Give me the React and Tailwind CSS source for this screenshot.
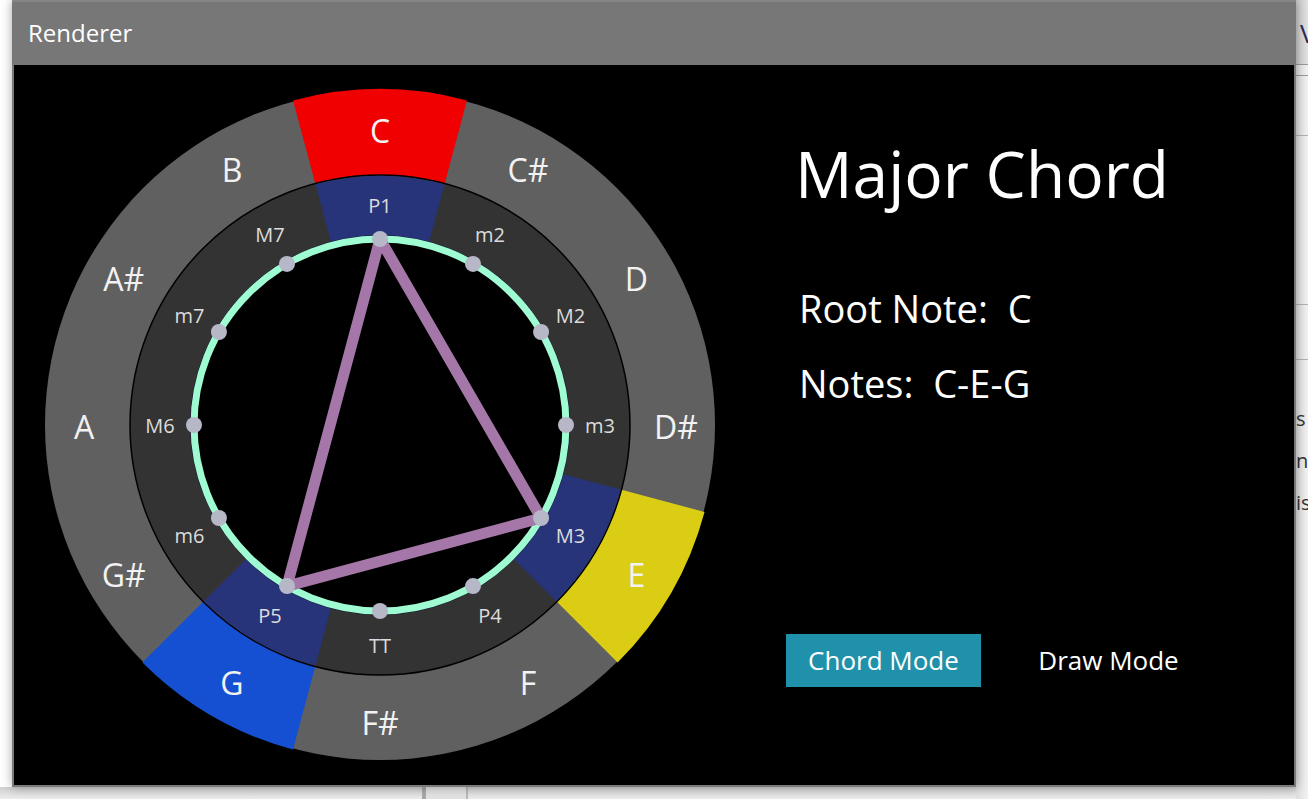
import React from "react";

const CX = 366;
const CY = 360;

const NOTES = ["C", "C#", "D", "D#", "E", "F", "F#", "G", "G#", "A", "A#", "B"];
const INTERVALS = ["P1", "m2", "M2", "m3", "M3", "P4", "TT", "P5", "m6", "M6", "m7", "M7"];
const NOTE_FILL = { 0: "#f00000", 4: "#dbcc14", 7: "#1650d2" };
const CHORD = [0, 4, 7];

function pt(deg, r) {
  const a = (deg * Math.PI) / 180;
  return [CX + r * Math.sin(a), CY - r * Math.cos(a)];
}

function sector(i, r1, r2) {
  const a1 = i * 30 - 15;
  const a2 = i * 30 + 15;
  const [x1, y1] = pt(a1, r2);
  const [x2, y2] = pt(a2, r2);
  const [x3, y3] = pt(a2, r1);
  const [x4, y4] = pt(a1, r1);
  return `M${x1} ${y1} A${r2} ${r2} 0 0 1 ${x2} ${y2} L${x3} ${y3} A${r1} ${r1} 0 0 0 ${x4} ${y4} Z`;
}

function Wheel() {
  const tri = CHORD.map((i) => pt(i * 30, 186).join(",")).join(" ");
  return (
    <svg width="720" height="720" viewBox="0 0 720 720" className="shrink-0">
      <circle cx={CX} cy={CY} r="335" fill="#606060" />
      {CHORD.map((i) => (
        <path key={"n" + i} d={sector(i, 249, 336)} fill={NOTE_FILL[i]} />
      ))}
      <circle cx={CX} cy={CY} r="250" fill="#333333" stroke="#000" strokeWidth="1.5" />
      {CHORD.map((i) => (
        <path key={"i" + i} d={sector(i, 189, 249.2)} fill="#283479" />
      ))}
      <circle cx={CX} cy={CY} r="189.5" fill="none" stroke="#0b1030" strokeWidth="1" />
      <circle cx={CX} cy={CY} r="186" fill="#000" stroke="#9ffcd2" strokeWidth="7" />
      {NOTES.map((n, i) => {
        const [x, y] = pt(i * 30, 296);
        return (
          <text key={n} x={x} y={y + 1} textAnchor="middle" dominantBaseline="central" fill="#f2f2f2" fontSize="32" fontFamily="'Open Sans', sans-serif">
            {n}
          </text>
        );
      })}
      {INTERVALS.map((n, i) => {
        const [x, y] = pt(i * 30, 220);
        return (
          <text key={n} x={x} y={y} textAnchor="middle" dominantBaseline="central" fill="#dcdcdc" fontSize="20" fontFamily="'Open Sans', sans-serif">
            {n}
          </text>
        );
      })}
      <polygon points={tri} fill="none" stroke="#a577a9" strokeWidth="11" strokeLinejoin="round" />
      {INTERVALS.map((n, i) => {
        const [x, y] = pt(i * 30, 186);
        return <circle key={"d" + n} cx={x} cy={y} r="8" fill="#b6b8c8" />;
      })}
    </svg>
  );
}

export default function App() {
  return (
    <div className="relative w-[1308px] h-[799px] overflow-hidden bg-white font-['Open_Sans',sans-serif]">
      {/* app behind the window */}
      <div className="flex h-full">
        <div className="w-[1296px] flex flex-col">
          <div className="flex-1 bg-white" />
          <div className="h-[12px] flex bg-gradient-to-b from-[#cfcfcf] to-[#ececec]">
            <div className="w-[422px]" />
            <div className="w-[4px] bg-[#a8a8a8]" />
            <div className="w-[40px] bg-[#e2e2e2]" />
            <div className="w-[2px] bg-[#b8b8b8]" />
            <div className="flex-1" />
          </div>
        </div>
        <div className="flex-1 flex flex-col overflow-hidden bg-gradient-to-r from-[#dedede] to-[#f2f2f2] text-[#333] text-[20px]">
          <div className="h-[64px] pl-[4px] pt-[14px] text-[26px] text-[#2b2b55] bg-gradient-to-r from-[#c9c9c9] to-[#e2e2e2]">V</div>
          <div className="h-[1px] bg-[#9a9a9a]" />
          <div className="h-[10px]" />
          <div className="h-[1px] bg-[#9a9a9a]" />
          <div className="h-[59px]" />
          <div className="h-[1px] bg-[#b0b0b0]" />
          <div className="h-[168px]" />
          <div className="h-[1px] bg-[#b0b0b0]" />
          <div className="h-[54px]" />
          <div className="h-[1px] bg-[#b0b0b0]" />
          <div className="pt-[38px] leading-[42px] whitespace-nowrap">
            <div>s</div>
            <div>n</div>
            <div>is</div>
          </div>
        </div>
      </div>

      {/* renderer window */}
      <div className="absolute left-[12px] top-0 w-[1284px] h-[787px] flex flex-col bg-[#7a7a7a] px-[2px] pb-[2px] shadow-[0_0_10px_rgba(0,0,0,0.35)]">
        <div className="h-[65px] flex items-center pb-[1px] bg-[#777777] border-t-2 border-[#858585] -mx-[2px] pl-[16px]">
          <span className="text-[24px] text-white leading-none">Renderer</span>
        </div>
        <div className="flex-1 bg-black flex">
          <Wheel />
          <div className="ml-[52px] flex flex-col text-white">
            <div className="mt-[77px] pl-[9px] text-[64px] leading-none">Major Chord</div>
            <div className="mt-[83px] pl-[13px] text-[38px] leading-none whitespace-pre">Root Note:  C</div>
            <div className="mt-[37px] pl-[13px] text-[38px] leading-none whitespace-pre">Notes:  C-E-G</div>
            <div className="mt-[232px] flex gap-[30px] text-[26px]">
              <div className="w-[195px] h-[53px] flex items-center justify-center bg-[#1f91aa]">Chord Mode</div>
              <div className="w-[195px] h-[53px] flex items-center justify-center">Draw Mode</div>
            </div>
          </div>
        </div>
      </div>
    </div>
  );
}
